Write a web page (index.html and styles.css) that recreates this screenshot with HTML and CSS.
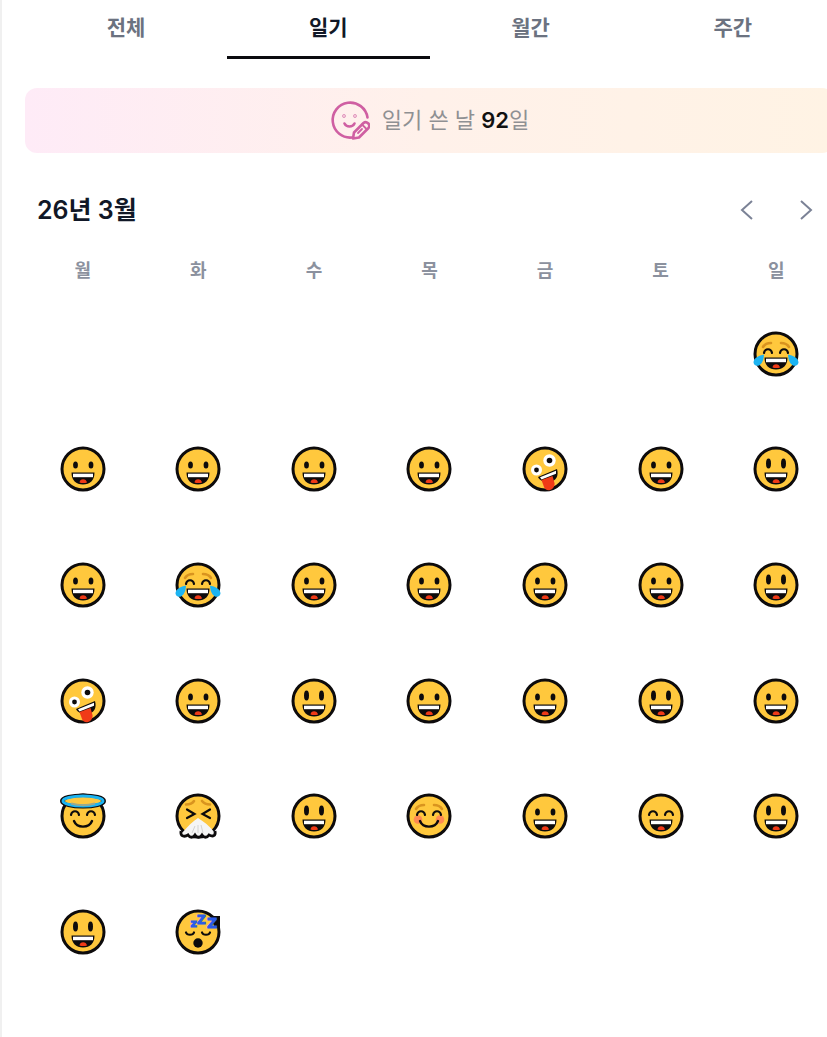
FILE: index.html
```html
<!DOCTYPE html>
<html lang="ko">
<head>
    <meta charset="UTF-8">
    <meta name="viewport" content="width=device-width, initial-scale=1.0">
    <title>일기</title>
    <link rel="stylesheet" href="styles.css">
</head>
<body>

<!-- emoji set -->
<svg class="sprite" aria-hidden="true">
    <symbol id="face" viewBox="0 0 48 48">
        <circle cx="24" cy="24" r="21" fill="#ffc83d" stroke="#0d0b0c" stroke-width="3"/>
    </symbol>
    <symbol id="mouth" viewBox="0 0 48 48">
        <path d="M12.500 27.500h23c0 8-4.500 12-11.500 12s-11.500-4-11.500-12z" fill="#0d0b0c"/>
        <path d="M14 28.700h20v3.500H14z" fill="#fff"/>
        <path d="M20.500 37.500c0-4.500 7-4.500 7.500 0-2 .8-5.500.8-7.500 0z" fill="#f03a17"/>
    </symbol>
    <symbol id="arcs" viewBox="0 0 48 48">
        <path d="M12 23c1-5 7-5 8 0M28 23c1-5 7-5 8 0" fill="none" stroke="#0d0b0c" stroke-width="2.200" stroke-linecap="round"/>
    </symbol>
    <symbol id="brows" viewBox="0 0 48 48">
        <path d="M11 17c1.500-2.500 4.500-4 8-4M29 13c3.500 0 6.500 1.500 8 4" fill="none" stroke="#d9941f" stroke-width="2.600" stroke-linecap="round"/>
    </symbol>
    <symbol id="grin" viewBox="0 0 48 48">
        <use href="#face"/>
        <ellipse cx="16.500" cy="20" rx="2.400" ry="3.500" fill="#0d0b0c"/>
        <ellipse cx="32" cy="20" rx="2.400" ry="3.500" fill="#0d0b0c"/>
        <use href="#mouth"/>
    </symbol>
    <symbol id="smiley" viewBox="0 0 48 48">
        <use href="#face"/>
        <ellipse cx="16.500" cy="18.500" rx="2.500" ry="5" fill="#0d0b0c"/>
        <ellipse cx="31.500" cy="18.500" rx="2.500" ry="5" fill="#0d0b0c"/>
        <use href="#mouth"/>
    </symbol>
    <symbol id="smile" viewBox="0 0 48 48">
        <use href="#face"/>
        <use href="#arcs"/>
        <use href="#mouth"/>
    </symbol>
    <symbol id="joy" viewBox="0 0 48 48">
        <use href="#face"/>
        <use href="#brows"/>
        <use href="#arcs"/>
        <use href="#mouth"/>
        <path d="M12 24.500c-5 1-10.500 3.500-10.500 8 1 5.500 10 5 10.500-8zM36 24.500c5 1 10.500 3.500 10.500 8-1 5.500-10 5-10.500-8z" fill="#1cb4f2"/>
    </symbol>
    <symbol id="zany" viewBox="0 0 48 48">
        <use href="#face"/>
        <circle cx="15.500" cy="25" r="5.500" fill="#fff"/>
        <circle cx="15.500" cy="25" r="2.400" fill="#0d0b0c"/>
        <circle cx="28.500" cy="15.500" r="6.200" fill="#fff"/>
        <circle cx="28.500" cy="15.500" r="2.800" fill="#0d0b0c"/>
        <path d="M17 32l19-8c2 7-1 12-7 13-5 1-10-1-12-5z" fill="#0d0b0c"/>
        <path d="M19 32.300l16-6.600v3l-14.500 5.800z" fill="#fff"/>
        <path d="M20.500 35l11-4 2 7c1 6.500-8 10.500-10.500 4z" fill="#f03a17"/>
    </symbol>
    <symbol id="halo" viewBox="0 0 48 48">
        <use href="#face"/>
        <ellipse cx="24" cy="9" rx="20.500" ry="5" fill="none" stroke="#0d0b0c" stroke-width="5"/>
        <ellipse cx="24" cy="9" rx="18" ry="4" fill="#ffc83d"/>
        <ellipse cx="24" cy="9" rx="20" ry="5" fill="none" stroke="#1cb4f2" stroke-width="3"/>
        <path d="M12 11.500c7 2 17 2 24 0" fill="none" stroke="#9ca98c" stroke-width="2"/>
        <use href="#arcs"/>
        <path d="M15 29c3 7.500 15 7.500 18 0" fill="none" stroke="#0d0b0c" stroke-width="2.400" stroke-linecap="round"/>
    </symbol>
    <symbol id="sneeze" viewBox="0 0 48 48">
        <use href="#face"/>
        <path d="M12 12.500c3.500 0 6.500-1 8-3.500M28 9c2 2.500 5 3.500 8 3.500" fill="none" stroke="#d9941f" stroke-width="2.600" stroke-linecap="round"/>
        <path d="M13 17.500l7.500 4.500-7.500 4M36 17.500L28.500 22l7.500 4" fill="none" stroke="#0d0b0c" stroke-width="2.200" stroke-linecap="round"/>
        <path d="M24 26c-5 3-10 8-16 15 1 4 5 4 6 2 2 3 5 3 7 0 2 3 5 3 7 0 2 3 5 3 7 0 2 2 5 1 6-2-5-7-12-12-17-15z" fill="#f5f5f5"/>
        <path d="M7 39c-1 6 4 6 7 4 2 3 5 3 7 0 2 3 5 3 7 0 2 3 5 3 7 0 4 2 7 1 6-4" fill="none" stroke="#0d0b0c" stroke-width="2.800"/>
        <path d="M21 34l-3 7M27 33l2 8M24 33v8" stroke="#d3d3d3"/>
    </symbol>
    <symbol id="blush" viewBox="0 0 48 48">
        <use href="#face"/>
        <use href="#brows"/>
        <circle cx="13" cy="27.500" r="4.300" fill="#ff8a52"/>
        <circle cx="35" cy="27.500" r="4.300" fill="#ff8a52"/>
        <use href="#arcs"/>
        <path d="M15 29c3 7.500 15 7.500 18 0" fill="none" stroke="#0d0b0c" stroke-width="2.400" stroke-linecap="round"/>
    </symbol>
</svg>

<main class="container">
    <nav class="tabs">
        <button type="button" class="tab">전체</button>
        <button type="button" class="tab active">일기</button>
        <button type="button" class="tab">월간</button>
        <button type="button" class="tab">주간</button>
    </nav>

    <div class="banner">
        <svg class="banner-icon" viewBox="0 0 40 40" fill="none" stroke="#cf5fa2" stroke-width="2.600" stroke-linecap="round" stroke-linejoin="round">
            <path d="M37.500 17.500A17.500 17.500 0 1 0 22 37.500"/>
            <path d="M14.500 23.500c2 4 8 4 10 0"/>
            <circle cx="14" cy="16" r=".4"/>
            <circle cx="25" cy="16" r=".4"/>
            <path d="M23 38.500l1-6 9.500-9.500c3-2.500 7.500 1.500 5 5L29 37.500z"/>
            <path d="M32 24.500l4 4M28 33l4-4" stroke-width="1.800"/>
        </svg>
        <p>일기 쓴 날 <strong>92</strong>일</p>
    </div>

    <div class="month">
        <h1>26년 3월</h1>
        <div class="arrows">
            <button type="button" aria-label="이전 달"><svg viewBox="0 0 24 24"><path d="M17 3L7 12l10 9"/></svg></button>
            <button type="button" aria-label="다음 달"><svg viewBox="0 0 24 24"><path d="M7 3l10 9-10 9"/></svg></button>
        </div>
    </div>

    <table class="calendar">
        <thead>
            <tr><th>월</th><th>화</th><th>수</th><th>목</th><th>금</th><th>토</th><th>일</th></tr>
        </thead>
        <tbody>
            <tr>
                <td></td><td></td><td></td><td></td><td></td><td></td>
                <td><div class="day"><svg><use href="#joy"/></svg></div></td>
            </tr>
            <tr>
                <td><div class="day"><svg><use href="#grin"/></svg></div></td>
                <td><div class="day"><svg><use href="#grin"/></svg></div></td>
                <td><div class="day"><svg><use href="#grin"/></svg></div></td>
                <td><div class="day"><svg><use href="#grin"/></svg></div></td>
                <td><div class="day"><svg><use href="#zany"/></svg></div></td>
                <td><div class="day"><svg><use href="#grin"/></svg></div></td>
                <td><div class="day"><svg><use href="#smiley"/></svg></div></td>
            </tr>
            <tr>
                <td><div class="day"><svg><use href="#grin"/></svg></div></td>
                <td><div class="day"><svg><use href="#joy"/></svg></div></td>
                <td><div class="day"><svg><use href="#grin"/></svg></div></td>
                <td><div class="day"><svg><use href="#grin"/></svg></div></td>
                <td><div class="day"><svg><use href="#grin"/></svg></div></td>
                <td><div class="day"><svg><use href="#grin"/></svg></div></td>
                <td><div class="day"><svg><use href="#smiley"/></svg></div></td>
            </tr>
            <tr>
                <td><div class="day"><svg><use href="#zany"/></svg></div></td>
                <td><div class="day"><svg><use href="#grin"/></svg></div></td>
                <td><div class="day"><svg><use href="#smiley"/></svg></div></td>
                <td><div class="day"><svg><use href="#grin"/></svg></div></td>
                <td><div class="day"><svg><use href="#grin"/></svg></div></td>
                <td><div class="day"><svg><use href="#smiley"/></svg></div></td>
                <td><div class="day"><svg><use href="#grin"/></svg></div></td>
            </tr>
            <tr>
                <td><div class="day"><svg><use href="#halo"/></svg></div></td>
                <td><div class="day"><svg><use href="#sneeze"/></svg></div></td>
                <td><div class="day"><svg><use href="#smiley"/></svg></div></td>
                <td><div class="day"><svg><use href="#blush"/></svg></div></td>
                <td><div class="day"><svg><use href="#grin"/></svg></div></td>
                <td><div class="day"><svg><use href="#smile"/></svg></div></td>
                <td><div class="day"><svg><use href="#smiley"/></svg></div></td>
            </tr>
            <tr>
                <td><div class="day"><svg><use href="#smiley"/></svg></div></td>
                <td>
                    <div class="day">
                        <svg viewBox="0 0 48 48">
                            <use href="#face"/>
                            <path d="M12 24.500c1 3 7 3 8 0M28 24.500c1 3 7 3 8 0" fill="none" stroke="#0d0b0c" stroke-width="2.200" stroke-linecap="round"/>
                            <circle cx="24" cy="35" r="4.700" fill="#0d0b0c"/>
                            <path d="M36 8h10v12h-5z" fill="#0d0b0c"/>
                            <g class="zzz">
                                <text x="16.500" y="19" font-size="11">z</text>
                                <text x="23" y="16" font-size="12">Z</text>
                                <text x="33" y="20" font-size="14">Z</text>
                            </g>
                        </svg>
                    </div>
                </td>
                <td></td><td></td><td></td><td></td><td></td>
            </tr>
        </tbody>
    </table>
</main>

</body>
</html>
```
FILE: styles.css
```css
*{
    box-sizing: border-box;
    margin: 0;
    padding: 0;
}

body {
    background-color: #fff;
    color: #111827;
    font-family: Inter, "Noto Sans CJK KR", sans-serif;
    overflow-x: hidden;
}

button {
    border: none;
    background: none;
    font: inherit;
    cursor: pointer;
}

.sprite {
    position: absolute;
    width: 0;
    height: 0;
}

.container {
    min-height: 100vh;
    margin-right: -7px;
    padding-left: 23px;
    border-left: 2px solid #f0f0f0;
}

.tabs {
    display: flex;
}

.tab {
    flex: 1;
    padding: 12px 0;
    border-bottom: 3px solid transparent;
    color: #6b7280;
    font-size: 21px;
    font-weight: 600;
    line-height: 32px;
}

.tab.active {
    color: #111827;
    border-color: #0b0b0f;
}

.banner {
    display: flex;
    align-items: center;
    justify-content: center;
    gap: 12px;
    margin-top: 29px;
    padding: 12px 0 13px;
    border-radius: 12px;
    background: linear-gradient(90deg, #feebf7, #fff1ea 50%, #fff3e4);
    color: #8f9093;
    font-size: 22px;
    line-height: 40px;
}

.banner strong {
    color: #111;
    font-weight: 600;
}

.banner-icon {
    width: 40px;
    height: 40px;
}

.month {
    display: flex;
    align-items: center;
    justify-content: space-between;
    margin: 41px 0 33px;
    padding: 0 16px 0 12px;
}

.month h1 {
    font-size: 25px;
    font-weight: 600;
    line-height: 32px;
}

.arrows {
    display: flex;
    gap: 35px;
}

.arrows button {
    width: 24px;
    height: 24px;
}

.arrows svg {
    display: block;
    fill: none;
    stroke: #7b8296;
    stroke-width: 2;
}

.calendar {
    width: 100%;
    table-layout: fixed;
    border-collapse: collapse;
}

.calendar th {
    padding-bottom: 13px;
    color: #8b919e;
    font-size: 18px;
    font-weight: 600;
    line-height: 24px;
}

.day {
    display: flex;
    align-items: center;
    justify-content: center;
    aspect-ratio: 1;
}

.day svg {
    width: 48px;
    height: 48px;
}

.zzz {
    fill: #2b5be8;
    stroke: #2b5be8;
    font-family: "DejaVu Sans", sans-serif;
    font-weight: bold;
}
```
